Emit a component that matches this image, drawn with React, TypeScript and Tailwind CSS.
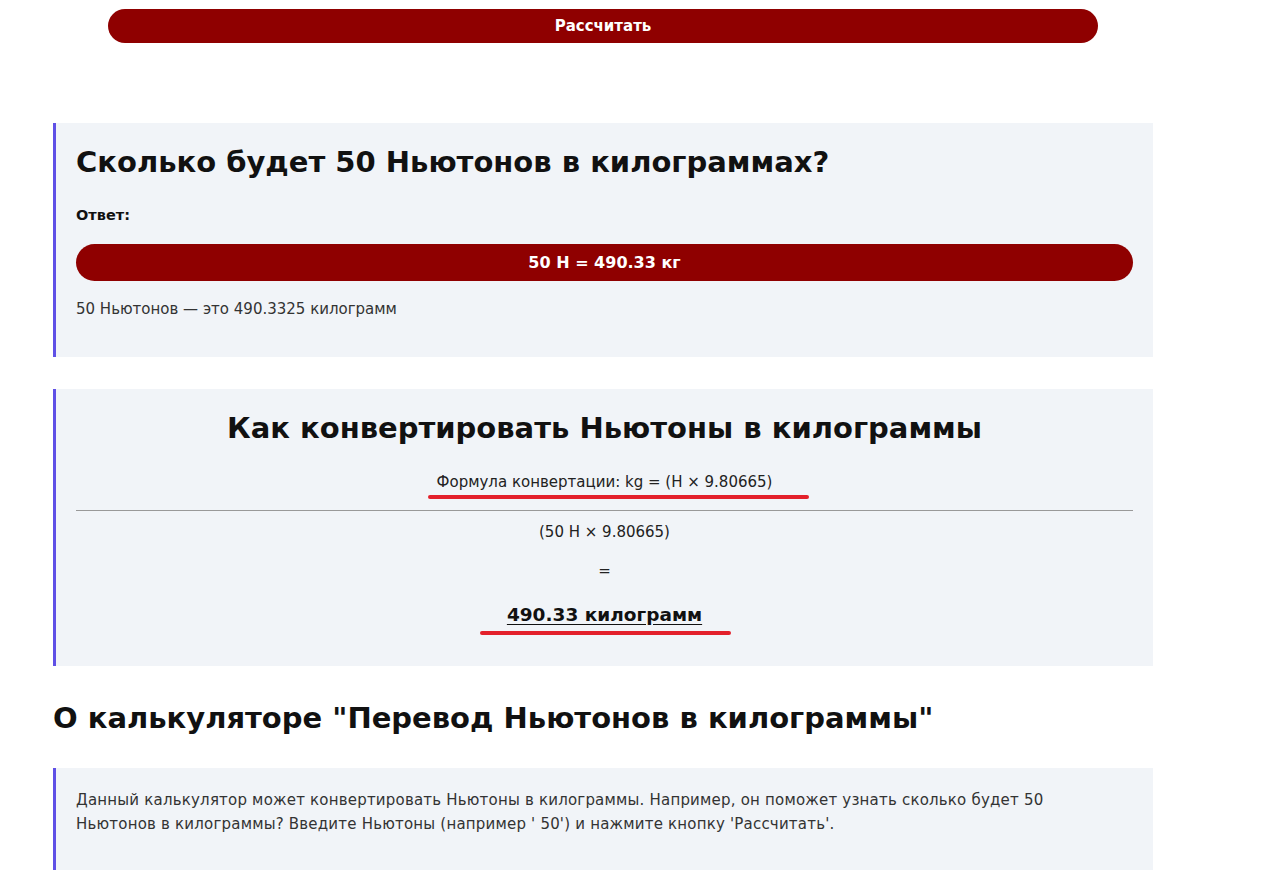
import React from "react";

const font = { fontFamily: '"DejaVu Sans", "Open Sans", sans-serif' };

export default function App() {
  return (
    <div className="min-h-[884px] bg-white text-[#111]" style={font}>
      <div className="ml-[53px] w-[1100px] pt-[9px]">
        <div className="mx-[55px] flex h-[34px] items-center justify-center rounded-full bg-[#8f0000] text-[15px] font-bold text-white">
          Рассчитать
        </div>

        <div className="mt-[80px] border-l-[3px] border-[#5f50e6] bg-[#f1f4f8] pl-[20px] pr-[20px] pt-[20px] pb-[36px]">
          <h2 className="text-[29px] font-bold leading-[38px] text-[#111]">Сколько будет 50 Ньютонов в килограммах?</h2>
          <div className="mt-[24px] text-[14.5px] font-bold leading-[20px]">Ответ:</div>
          <div className="mt-[19px] flex h-[37px] items-center justify-center rounded-full bg-[#8f0000] text-[16px] font-bold text-white">
            50 Н = 490.33 кг
          </div>
          <p className="mt-[16px] text-[15px] leading-[24px] text-[#333]">50 Ньютонов — это 490.3325 килограмм</p>
        </div>

        <div className="mt-[32px] border-l-[3px] border-[#5f50e6] bg-[#f1f4f8] px-[20px] pt-[20px] pb-[38px] text-center">
          <h2 className="text-[29px] font-bold leading-[38px] text-[#111]">Как конвертировать Ньютоны в килограммы</h2>
          <div className="mt-[23px] flex justify-center">
            <span className="relative inline-block text-[15px] leading-[24px] text-[#222]">
              Формула конвертации: kg = (Н × 9.80665)
              <span className="absolute left-[-9px] right-[-37px] top-[25px] h-[4px] rounded-full bg-[#e3202b]" />
            </span>
          </div>
          <div className="mt-[16px] h-px bg-[#999]" />
          <div className="mt-[9px] text-[15px] leading-[24px] text-[#222]">(50 Н × 9.80665)</div>
          <div className="mt-[15px] text-[15px] leading-[24px] text-[#222]">=</div>
          <div className="mt-[19px] flex justify-center">
            <span className="relative inline-block text-[18.5px] font-bold leading-[26px] text-[#111] underline underline-offset-[3px]">
              490.33 килограмм
              <span className="absolute left-[-27px] right-[-29px] top-[29px] h-[4px] rounded-full bg-[#e3202b]" />
            </span>
          </div>
        </div>

        <h2 className="mt-[34px] text-[29px] font-bold leading-[36px] text-[#111]">О калькуляторе "Перевод Ньютонов в килограммы"</h2>

        <div className="mt-[32px] border-l-[3px] border-[#5f50e6] bg-[#f1f4f8] px-[20px] pt-[20px] pb-[34px]">
          <p className="w-[1000px] text-[15px] leading-[24px] tracking-[0.2px] text-[#333]">
            Данный калькулятор может конвертировать Ньютоны в килограммы. Например, он поможет узнать сколько будет 50 Ньютонов в килограммы? Введите Ньютоны (например ' 50') и нажмите кнопку 'Рассчитать'.
          </p>
        </div>
      </div>
    </div>
  );
}
